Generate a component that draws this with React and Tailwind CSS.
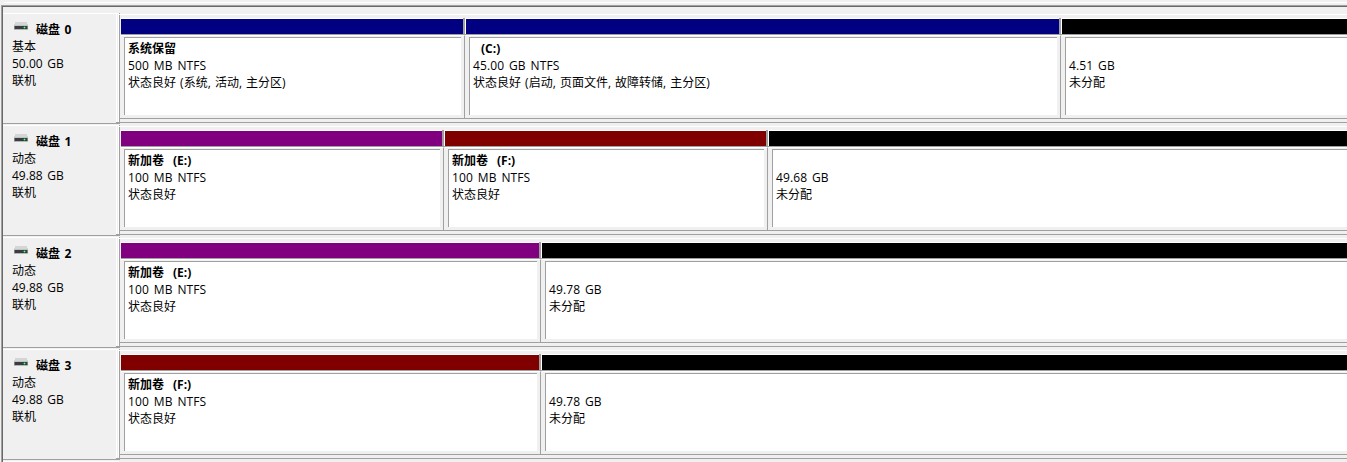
const disks = [
  { name: '磁盘 0', kind: '基本', size: '50.00 GB', vols: [
    { w: 'w-[345px]', c: 'bg-[#000080]', t: '系统保留', s: '500 MB NTFS', st: '状态良好 (系统, 活动, 主分区)' },
    { w: 'w-[596px]', c: 'bg-[#000080]', drive: '(C:)', s: '45.00 GB NTFS', st: '状态良好 (启动, 页面文件, 故障转储, 主分区)' },
    { w: 'flex-1', c: 'bg-black', s: '4.51 GB', st: '未分配', last: true },
  ] },
  { name: '磁盘 1', kind: '动态', size: '49.88 GB', vols: [
    { w: 'w-[324px]', c: 'bg-[#800080]', t: '新加卷', drive: '(E:)', s: '100 MB NTFS', st: '状态良好' },
    { w: 'w-[324px]', c: 'bg-[#800000]', t: '新加卷', drive: '(F:)', s: '100 MB NTFS', st: '状态良好' },
    { w: 'flex-1', c: 'bg-black', s: '49.68 GB', st: '未分配', last: true },
  ] },
  { name: '磁盘 2', kind: '动态', size: '49.88 GB', vols: [
    { w: 'w-[421px]', c: 'bg-[#800080]', t: '新加卷', drive: '(E:)', s: '100 MB NTFS', st: '状态良好' },
    { w: 'flex-1', c: 'bg-black', s: '49.78 GB', st: '未分配', last: true },
  ] },
  { name: '磁盘 3', kind: '动态', size: '49.88 GB', vols: [
    { w: 'w-[421px]', c: 'bg-[#800000]', t: '新加卷', drive: '(F:)', s: '100 MB NTFS', st: '状态良好' },
    { w: 'flex-1', c: 'bg-black', s: '49.78 GB', st: '未分配', last: true },
  ] },
];

function DriveIcon() {
  return (
    <svg width="14" height="8" viewBox="0 0 14 8" shapeRendering="crispEdges" className="block shrink-0">
      <path d="M1 0h12l1 4H0z" fill="#d3d5d7" />
      <rect y="3" width="14" height="1" fill="#c0c3c6" />
      <rect y="4" width="14" height="3" fill="#7c8083" />
      <rect x="1" y="4" width="12" height="3" fill="#3a3d3f" />
      <rect x="9" y="5" width="3" height="1" fill="#1c9a2c" />
      <rect x="10" y="4" width="1" height="3" fill="#1c9a2c" />
      <rect x="10" y="5" width="1" height="1" fill="#5dff73" />
      <rect y="7" width="14" height="1" fill="#b4b7b9" />
    </svg>
  );
}

function Volume({ v }) {
  return (
    <div className={`flex h-[100px] min-w-0 flex-col ${v.w}`}>
      <div className="flex h-4 shrink-0 border-t border-white">
        <div className={`h-[15px] flex-1 ${v.c}`} />
        {!v.last && <div className="-mt-px flex w-[3px]"><div className="w-0.5 bg-[#a0a0a0]" /><div className="w-px bg-white" /></div>}
      </div>
      <div className={`flex h-[84px] flex-col border-t border-[#a0a0a0] ${v.last ? '' : 'pr-px'}`}>
        <div className={`flex-1 border-t border-white pt-px pb-[3px] pl-[3px] ${v.last ? '' : 'border-r border-r-[#a0a0a0] pr-[3px]'}`}>
          <div className="h-[78px] overflow-hidden border-t border-l border-[#a0a0a0] bg-white pt-[2px] pl-[3px] whitespace-pre">
            <div className="flex h-[17px] font-bold">
              <span>{v.t}</span>
              {v.drive && <span className={v.t ? 'ml-[9px]' : 'ml-[8px]'}>{v.drive}</span>}
            </div>
            <div className="h-[17px] tracking-[0.1px] [word-spacing:1.7px]">{v.s}</div>
            <div className="h-[17px] [word-spacing:1px]">{v.st}</div>
          </div>
        </div>
      </div>
    </div>
  );
}

export default function App() {
  return (
    <div className="flex h-[462px] w-[1347px] flex-col overflow-hidden bg-[#f0f0f0] font-['Open_Sans','Noto_Sans_CJK_SC',sans-serif] text-[12px] leading-[17px] text-black">
      <div className="flex h-[5px] shrink-0 flex-col pt-[2px] pl-1"><div className="h-px bg-white" /></div>
      <div className="ml-px flex flex-1 border-t border-l border-[#a0a0a0]">
        <div className="min-w-0 flex-1 border-t border-l border-[#696969] pt-[6px]">
          {disks.map((d) => (
            <div key={d.name} className="flex h-[112px]">
              <div className="flex w-[116px] shrink-0 flex-col border-t border-white">
                <div className="flex h-[109px] border-r border-white pr-px">
                  <div className="flex-1 border-r border-white pl-[9px]">
                    <div className="flex h-6 font-bold">
                      <div className="ml-[2px] w-[22px] pt-2"><DriveIcon /></div>
                      <div className="pt-[7px] [word-spacing:1.5px]">{d.name}</div>
                    </div>
                    <div className="h-[17px]">{d.kind}</div>
                    <div className="h-[17px] [word-spacing:1.5px]">{d.size}</div>
                    <div className="h-[17px]">联机</div>
                  </div>
                </div>
                <div className="h-px bg-[#a0a0a0]" />
              </div>
              <div className="flex min-w-0 flex-1 flex-col">
                <div className="h-px w-px shrink-0 bg-[#a0a0a0]" />
                <div className="h-px shrink-0 bg-white" />
                <div className="flex h-[107px] shrink-0 border-l border-[#a0a0a0]">
                  <div className="flex h-[104px] min-w-0 flex-1 border-b border-[#a0a0a0] pt-[3px] pl-px">
                    {d.vols.map((v, i) => <Volume key={i} v={v} />)}
                  </div>
                </div>
                <div className="-ml-[3px] h-px shrink-0 bg-[#a0a0a0]" />
                <div className="h-px w-px shrink-0 bg-[#a0a0a0]" />
              </div>
            </div>
          ))}
          <div className="h-px w-[116px] bg-white" />
        </div>
      </div>
    </div>
  );
}
